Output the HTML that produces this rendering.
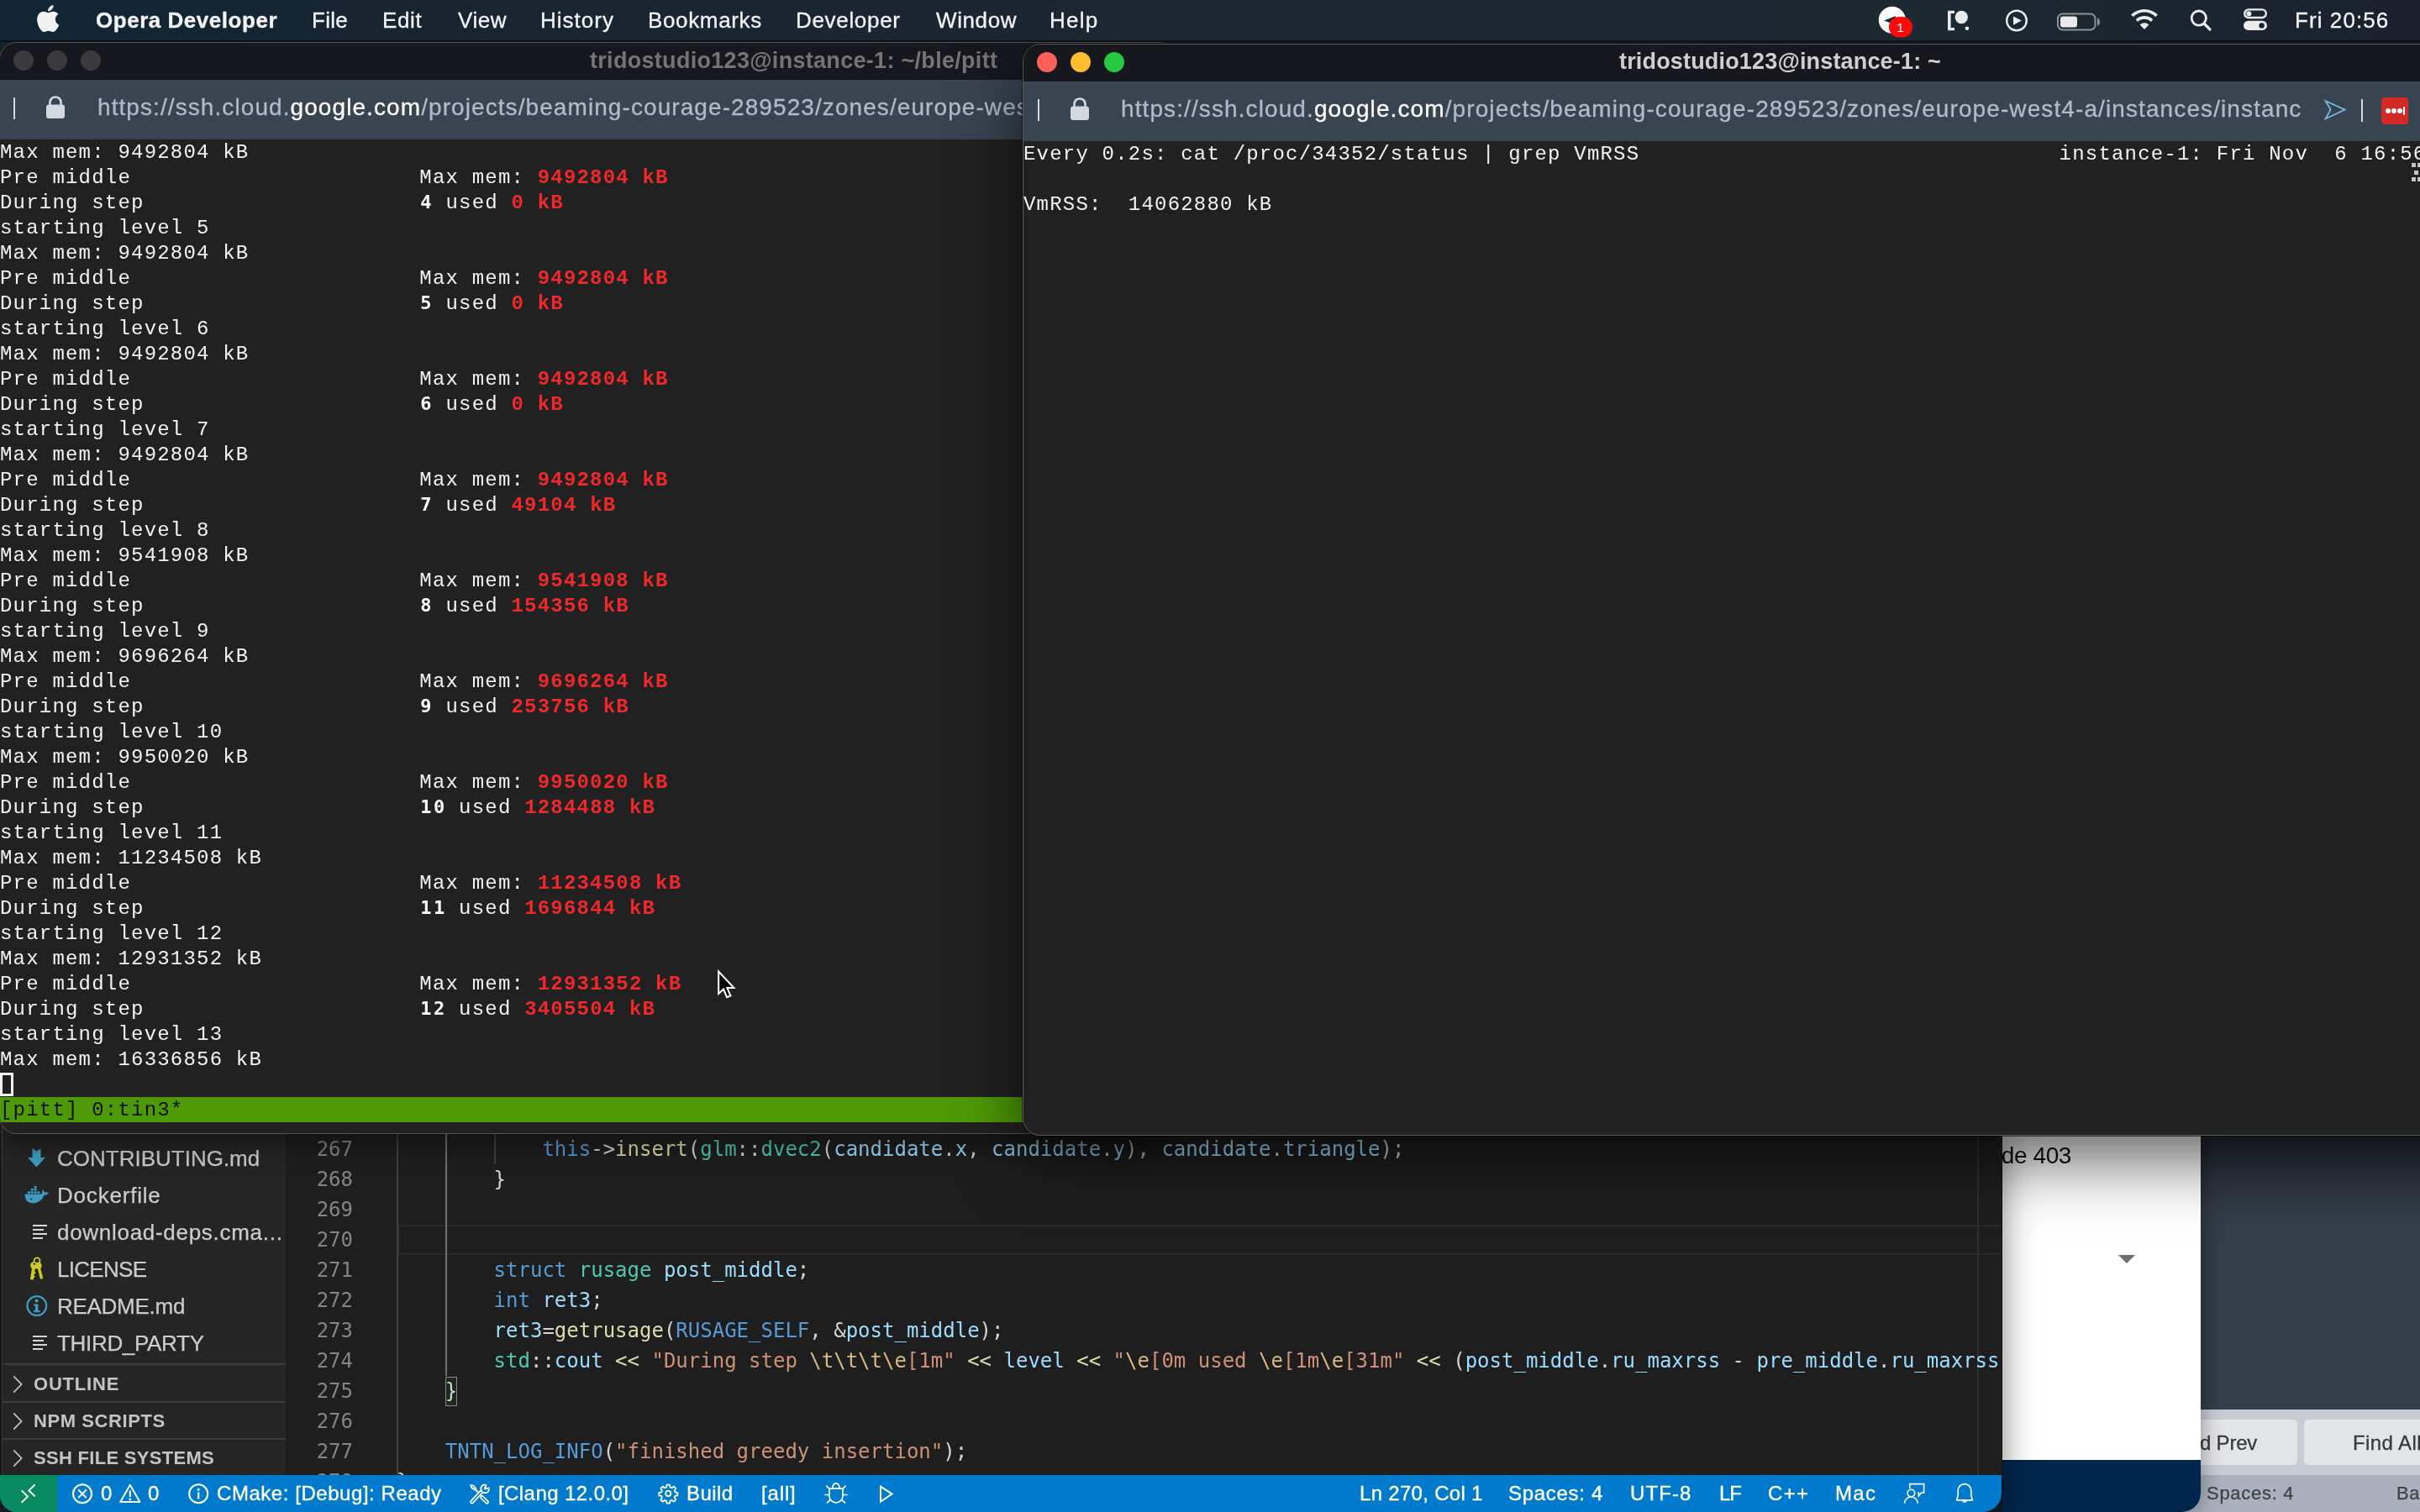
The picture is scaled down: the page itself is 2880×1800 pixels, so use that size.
<!DOCTYPE html>
<html lang="en">
<head>
<meta charset="utf-8">
<title>Desktop</title>
<style>
*{box-sizing:border-box;margin:0;padding:0}
html,body{width:2880px;height:1800px;overflow:hidden;background:#16232e}
body{position:relative;font-family:"Liberation Sans",sans-serif;color:#fff}
.abs{position:absolute}
.t{position:absolute;white-space:pre;line-height:1;will-change:transform}
/* ---------- menu bar ---------- */
#menubar{position:absolute;left:0;top:0;width:2880px;height:50px;background:linear-gradient(90deg,#112535 0%,#122533 8%,#182531 16%,#1b2631 40%,#1c2931 80%,#1b252f 90%,#1a212d 100%);z-index:50}
#menubar:after{content:"";position:absolute;left:0;right:0;bottom:0;height:2px;background:rgba(0,0,0,.55)}
#menubar .t{color:#f4f4f5;font-size:26px;top:9px;line-height:30px;letter-spacing:.6px;-webkit-text-stroke:.3px #f4f4f5}
/* ---------- terminal windows ---------- */
.win{position:absolute;border-radius:20px;background:#212121;overflow:hidden}
.win .title{position:absolute;left:0;right:0;top:0;height:44px;background:#16181e}
.win .url{position:absolute;left:0;right:0;top:44px;height:71px;background:#394451}
.win .url .t{font-size:28px;top:16.4px;line-height:34px;color:#adbccb;letter-spacing:1.08px;-webkit-text-stroke:.3px #adbccb}
.win .url b{-webkit-text-stroke:.3px #fff}
.win .url b{font-weight:normal;color:#fff}
.tl{position:absolute;width:24px;height:24px;border-radius:50%;top:9px;margin-left:1px}
#winR .url>*{margin-left:1px}
#winR .url>#urlR{margin-left:0}
.term{position:absolute;left:0;top:115px;font-family:"Liberation Mono",monospace;font-size:24px;letter-spacing:1.2px;line-height:30px;color:#f2f2f2;white-space:pre}
.term .l{height:30px;line-height:31.6px;overflow:hidden}
.term .r{color:#ef2929;font-weight:bold}
.term .w{font-family:"DejaVu Sans Mono",monospace;font-weight:bold;font-size:22px;letter-spacing:2.36px;margin-left:1px;margin-right:-1px;color:#fff;line-height:20px}
.ttl{font-weight:bold;font-size:27px;top:4.2px;line-height:30px;letter-spacing:.3px}
.term .cur{display:inline-block;width:15.6px;height:28px;vertical-align:top;margin-top:1px;box-shadow:inset 0 0 0 3px #f2f2f2}
.term .tmux{display:inline-block;background:#4e9a06;color:#111;width:1300px;height:30px;vertical-align:top}
.dot{position:absolute;top:13px;width:6px;height:6px;border-radius:50%;background:#fff}
.sq{position:absolute;width:5px;height:5px;background:#c4c4c4}
/* ---------- vscode ---------- */
.fn{left:68px;font-size:26px;line-height:30px;color:#cccccc;letter-spacing:.5px;-webkit-text-stroke:.25px #ccc}
.sh{left:40px;font-size:22px;line-height:30px;font-weight:bold;color:#c4c4c4;letter-spacing:.8px}
.ch{left:15px}
#ed .ln,#ed .cl{position:absolute;font-family:"DejaVu Sans Mono",monospace;font-size:24px;line-height:36px;height:36px;white-space:pre}
#ed .ln{left:0;width:80px;text-align:right;color:#858585}
#ed .cl{left:132px;color:#d4d4d4}
.k{color:#569cd6}.f{color:#dcdcaa}.t2{color:#4ec9b0}.v{color:#9cdcfe}.s{color:#ce9178}.e{color:#d7ba7d}
#sb .t{font-size:24px;line-height:30px;top:7px;color:#fff;letter-spacing:.4px;-webkit-text-stroke:.35px #fff}
</style>
</head>
<body>

<!-- ===== background apps (Sublime / white page) ===== -->
<div id="sublime" class="abs" style="left:2600px;top:1340px;width:280px;height:460px;background:linear-gradient(180deg,#222931 0,#2c343e 40px,#343d48 110px)">
  <div class="abs" style="left:0;top:338px;width:280px;height:78px;background:#c8ccd5"></div>
  <div class="abs" style="left:0;top:416px;width:280px;height:44px;background:#abb1bc"></div>
  <div class="abs" style="left:0;top:350px;width:134px;height:54px;background:#e3e4e8;border-radius:0 5px 5px 0"></div>
  <div class="abs" style="left:142px;top:350px;width:160px;height:54px;background:#e3e4e8;border-radius:5px"></div>
  <span class="t" id="su0" style="left:18px;top:363px;font-size:24px;line-height:30px;color:#36393e;letter-spacing:-.2px;-webkit-text-stroke:.3px #36393e">d Prev</span>
  <span class="t" id="su1" style="left:200px;top:363px;font-size:24px;line-height:30px;color:#36393e;letter-spacing:.4px;-webkit-text-stroke:.3px #36393e">Find All</span>
  <span class="t" id="su2" style="left:26px;top:423px;font-size:22px;line-height:30px;color:#3e4147;letter-spacing:.72px;-webkit-text-stroke:.25px #3e4147">Spaces: 4</span>
  <span class="t" id="su3" style="left:252px;top:423px;font-size:22px;line-height:30px;color:#3e4147;letter-spacing:.5px;-webkit-text-stroke:.25px #3e4147">Bash</span>
</div>
<div id="whitewin" class="abs" style="left:2383px;top:1340px;width:236px;height:460px;background:#fff;border-radius:0 0 22px 0;overflow:hidden;box-shadow:0 0 26px rgba(0,0,0,.4)">
  <span class="t" id="c403" style="left:-30px;top:19px;font-size:28px;line-height:34px;color:#111;letter-spacing:-.4px">code 403</span>
  <svg class="abs" style="left:137px;top:153px" width="22" height="12" viewBox="0 0 22 12"><path d="M1 1 H21 L11 11 Z" fill="#6e6e6e"/></svg>
  <div class="abs" style="left:0;top:398px;width:236px;height:62px;background:#00264d"></div>
</div>

<!-- ===== VS Code ===== -->
<div id="vscode" class="abs" style="left:0;top:1340px;width:2382px;height:460px;background:#1e1e1e;border-radius:0 0 22px 20px;overflow:hidden;box-shadow:0 0 0 1px #111,0 10px 40px rgba(0,0,0,.5)">
  <!-- sidebar -->
  <i class="abs" style="left:0;top:0;width:2px;height:416px;background:#181818;z-index:3"></i><i class="abs" style="left:2px;top:0;width:1px;height:416px;background:#383838;z-index:3"></i>
  <div id="side" class="abs" style="left:0;top:0;width:340px;height:416px;background:#252526">
    <svg class="abs" style="left:33px;top:27px" width="21" height="23" viewBox="0 0 21 23"><path d="M5.5 0 L10.5 3.6 L15.5 0 V11 H21 L10.5 22.6 L0 11 H5.5 Z" fill="#3f9cc0"/></svg>
    <span class="t fn" style="top:24px;letter-spacing:0.00px">CONTRIBUTING.md</span>
    <svg class="abs" style="left:29px;top:72px" width="30" height="21" viewBox="0 0 30 21"><path d="M0.6 9.6 H20.6 C21.4 7.4 21.6 5.6 20.8 3.8 C22.6 4.6 23.6 6 23.8 7.6 C25.8 7 27.6 7.4 28.8 8.2 C27.8 10 26 10.8 23.6 10.8 C21.4 16.6 16.6 20.4 9.6 20.4 C3.8 20.4 0.6 16.4 0.6 9.6 Z" fill="#3f9cc0"/><path d="M4 6.2h3v2.6H4zM7.8 6.2h3v2.6h-3zM11.6 6.2h3v2.6h-3zM15.4 6.2h3v2.6h-3zM7.8 3h3v2.6h-3zM11.6 3h3v2.6h-3zM11.6 -0.2h3v2.6h-3z" fill="#3f9cc0"/><circle cx="8.2" cy="15.4" r="1" fill="#252526"/></svg>
    <span class="t fn" style="top:68px;letter-spacing:0.80px">Dockerfile</span>
    <svg class="abs" style="left:39px;top:118px" width="18" height="18" viewBox="0 0 18 18"><path d="M0 1h17M0 6h13M0 11h17M0 16h12" stroke="#d4d7d6" stroke-width="2" fill="none"/></svg>
    <span class="t fn" style="top:112px;letter-spacing:0.71px">download-deps.cma...</span>
    <svg class="abs" style="left:35px;top:156px" width="17" height="29" viewBox="0 0 17 29"><g fill="none" stroke="#cccb28" stroke-linecap="butt"><circle cx="9" cy="4.8" r="3.5" stroke-width="1.8"/><path d="M5.4 11 L2.8 27.4" stroke-width="3.8"/><path d="M11 12 L14.6 26.4" stroke-width="3.4"/></g><circle cx="5.6" cy="10.4" r="4.4" fill="#cccb28"/><circle cx="10.6" cy="10.8" r="4" fill="#cccb28"/><circle cx="6" cy="8.6" r="1.2" fill="#252526"/><path d="M4.6 18 l3 .5 l-.4 2 l-3 -.5z M4 22.6 l2.6 .4 l-.3 2 l-2.6 -.4z" fill="#cccb28"/></svg>
    <span class="t fn" style="top:156px;letter-spacing:-0.71px">LICENSE</span>
    <svg class="abs" style="left:30px;top:201px" width="28" height="28" viewBox="0 0 28 28"><circle cx="13.8" cy="13.6" r="11.4" fill="none" stroke="#3f9cc0" stroke-width="2.2"/><path d="M11.8 5.8h3.6v3.4h-3.6z M10 11.4h5.4v7.6h2.2v2.2H10v-2.2h2V13.6h-2z" fill="#3f9cc0"/></svg>
    <span class="t fn" style="top:200px;letter-spacing:-0.28px">README.md</span>
    <svg class="abs" style="left:39px;top:250px" width="18" height="18" viewBox="0 0 18 18"><path d="M0 1h17M0 6h13M0 11h17M0 16h12" stroke="#d4d7d6" stroke-width="2" fill="none"/></svg>
    <span class="t fn" style="top:244px;letter-spacing:-0.32px">THIRD_PARTY</span>
    <i class="abs" style="left:0;top:283px;width:340px;height:2px;background:#3c3c3d"></i>
    <svg class="abs ch" style="top:296px" width="14" height="24" viewBox="0 0 14 24"><path d="M1.2 2.4 L10.6 12 L1.2 21.6" fill="none" stroke="#c8c8c8" stroke-width="1.7"/></svg>
    <span class="t sh" style="top:293px">OUTLINE</span>
    <i class="abs" style="left:0;top:328px;width:340px;height:2px;background:#3c3c3d"></i>
    <svg class="abs ch" style="top:340px" width="14" height="24" viewBox="0 0 14 24"><path d="M1.2 2.4 L10.6 12 L1.2 21.6" fill="none" stroke="#c8c8c8" stroke-width="1.7"/></svg>
    <span class="t sh" style="top:337px;letter-spacing:.58px">NPM SCRIPTS</span>
    <i class="abs" style="left:0;top:372px;width:340px;height:2px;background:#3c3c3d"></i>
    <svg class="abs ch" style="top:384px" width="14" height="24" viewBox="0 0 14 24"><path d="M1.2 2.4 L10.6 12 L1.2 21.6" fill="none" stroke="#c8c8c8" stroke-width="1.7"/></svg>
    <span class="t sh" style="top:381px;letter-spacing:.3px">SSH FILE SYSTEMS</span>
  </div>
  <!-- editor -->
  <div id="ed" class="abs" style="left:340px;top:10px;width:2041px;height:406px;overflow:hidden">
    <div class="abs" style="left:134px;top:108px;width:1920px;height:36px;border:2.5px solid #282828;border-right:0"></div>
    <i class="abs" style="left:132px;top:0;width:2px;height:407px;background:#404040"></i>
    <i class="abs" style="left:190px;top:0;width:2px;height:288px;background:#707070"></i>
    <i class="abs" style="left:248px;top:0;width:2px;height:36px;background:#404040"></i>
    <i class="abs" style="left:2013px;top:0;width:2px;height:407px;background:#303030"></i>
    <div class="abs" style="left:190px;top:289px;width:14px;height:35px;border:1px solid #8a8a8a;background:#1c2a1c"></div>
<div class="ln" style="top:0px">267</div><div class="cl" style="top:0px">            <span class="k">this</span>-&gt;<span class="f">insert</span>(<span class="t2">glm</span>::<span class="t2">dvec2</span>(<span class="v">candidate</span>.<span class="v">x</span>, <span class="v">candidate</span>.<span class="v">y</span>), <span class="v">candidate</span>.<span class="v">triangle</span>);</div>
<div class="ln" style="top:36px">268</div><div class="cl" style="top:36px">        }</div>
<div class="ln" style="top:72px">269</div><div class="cl" style="top:72px"></div>
<div class="ln" style="top:108px">270</div><div class="cl" style="top:108px"></div>
<div class="ln" style="top:144px">271</div><div class="cl" style="top:144px">        <span class="k">struct</span> <span class="t2">rusage</span> <span class="v">post_middle</span>;</div>
<div class="ln" style="top:180px">272</div><div class="cl" style="top:180px">        <span class="k">int</span> <span class="v">ret3</span>;</div>
<div class="ln" style="top:216px">273</div><div class="cl" style="top:216px">        <span class="v">ret3</span>=<span class="f">getrusage</span>(<span class="k">RUSAGE_SELF</span>, &amp;<span class="v">post_middle</span>);</div>
<div class="ln" style="top:252px">274</div><div class="cl" style="top:252px">        <span class="t2">std</span>::<span class="v">cout</span> <span class="f">&lt;&lt;</span> <span class="s">"During step </span><span class="e">\t\t\t\e</span><span class="s">[1m"</span> <span class="f">&lt;&lt;</span> <span class="v">level</span> <span class="f">&lt;&lt;</span> <span class="s">"</span><span class="e">\e</span><span class="s">[0m used </span><span class="e">\e</span><span class="s">[1m</span><span class="e">\e</span><span class="s">[31m"</span> <span class="f">&lt;&lt;</span> (<span class="v">post_middle</span>.<span class="v">ru_maxrss</span> - <span class="v">pre_middle</span>.<span class="v">ru_maxrss</span> - <span class="v">x</span></div>
<div class="ln" style="top:288px">275</div><div class="cl" style="top:288px">    }</div>
<div class="ln" style="top:324px">276</div><div class="cl" style="top:324px"></div>
<div class="ln" style="top:360px">277</div><div class="cl" style="top:360px">    <span class="k">TNTN_LOG_INFO</span>(<span class="s">"finished greedy insertion"</span>);</div>
<div class="ln" style="top:396px">278</div><div class="cl" style="top:396px">}</div>
  </div>
  <!-- status bar -->
  <div id="sb" class="abs" style="left:0;top:416px;width:2382px;height:44px;background:#007acc">
    <div class="abs" style="left:0;top:0;width:68px;height:44px;background:#078a5f"></div>
    <svg class="abs" style="left:22px;top:8px" width="26" height="28" viewBox="0 0 26 28"><path d="M3.6 10.4 L11 17.6 L3.6 24.8 M19.6 3.4 L12.4 10.4 L19.6 17.4" fill="none" stroke="#fff" stroke-width="2"/></svg>
    <svg class="abs" style="left:84px;top:8px" width="28" height="28" viewBox="0 0 28 28"><circle cx="14" cy="14.3" r="11" fill="none" stroke="#fff" stroke-width="2"/><path d="M9.2 9.5 L18.8 19.1 M18.8 9.5 L9.2 19.1" stroke="#fff" stroke-width="2"/></svg>
    <span class="t" id="s0" style="left:120.0px;letter-spacing:0.00px">0</span>
    <svg class="abs" style="left:141px;top:9px" width="28" height="26" viewBox="0 0 28 26"><path d="M13.8 2.8 L25.4 23 H2.2 Z" fill="none" stroke="#fff" stroke-width="2" stroke-linejoin="round"/><path d="M13.8 9.6 V17" stroke="#fff" stroke-width="2.2"/><circle cx="13.8" cy="19.9" r="1.4" fill="#fff"/></svg>
    <span class="t" id="s1" style="left:176.4px;letter-spacing:0.40px">0</span>
    <svg class="abs" style="left:222px;top:8px" width="28" height="28" viewBox="0 0 28 28"><circle cx="14.2" cy="14.3" r="11" fill="none" stroke="#fff" stroke-width="2"/><path d="M14.2 12.6 V20.2" stroke="#fff" stroke-width="2.2"/><circle cx="14.2" cy="9.2" r="1.5" fill="#fff"/></svg>
    <span class="t" id="s2" style="left:257.8px;letter-spacing:0.55px">CMake: [Debug]: Ready</span>
    <svg class="abs" style="left:557px;top:8px" width="28" height="28" viewBox="0 0 28 28"><g fill="none" stroke-linecap="round" stroke-linejoin="round"><path d="M3 4 L6.4 4.6 L9.4 8.6 L8.2 9.8 L4.2 7 Z" stroke="#fff" stroke-width="1.7"/><path d="M8.8 9.2 L15.4 16.4" stroke="#fff" stroke-width="1.9"/><path d="M16.6 18.6 L22.6 24.2" stroke="#fff" stroke-width="4.8"/><path d="M16.6 18.6 L22.6 24.2" stroke="#007acc" stroke-width="1.5"/><path d="M4.6 24 L16.4 11.4" stroke="#fff" stroke-width="4.8"/><path d="M4.6 24 L15.6 12.2" stroke="#007acc" stroke-width="1.5"/><circle cx="20.2" cy="8.4" r="4.9" stroke="#fff" stroke-width="2" fill="#007acc"/><path d="M20.2 8.4 L22 -1 L30 7 Z" fill="#007acc" stroke="#007acc" stroke-width="2.4"/><path d="M21.4 3.8 L19.9 8.6 L24.8 7.4" stroke="#fff" stroke-width="1.9"/></g></svg>
    <span class="t" id="s3" style="left:593.2px;letter-spacing:0.43px">[Clang 12.0.0]</span>
    <svg class="abs" style="left:781px;top:8px" width="28" height="28" viewBox="0 0 28 28"><g fill="none" stroke="#fff" stroke-width="2" stroke-linejoin="round" transform="translate(14.3 14) scale(.9) translate(-14.2 -14.2)"><circle cx="14.2" cy="14.2" r="3.4"/><path d="M12.4 2.6h3.6l.7 3.2 2.2.9 2.8-1.8 2.5 2.5-1.8 2.8.9 2.2 3.2.7v3.6l-3.2.7-.9 2.2 1.8 2.8-2.5 2.5-2.8-1.8-2.2.9-.7 3.2h-3.6l-.7-3.2-2.2-.9-2.8 1.8-2.5-2.5 1.8-2.8-.9-2.2-3.2-.7v-3.6l3.2-.7.9-2.2-1.8-2.8 2.5-2.5 2.8 1.8 2.2-.9z"/></g></svg>
    <span class="t" id="s4" style="left:816.6px;letter-spacing:0.45px">Build</span>
    <span class="t" id="s5" style="left:906.2px;letter-spacing:0.85px">[all]</span>
    <svg class="abs" style="left:981px;top:7px" width="28" height="30" viewBox="0 0 28 30"><g fill="none" stroke="#fff" stroke-width="1.7" stroke-linecap="round" stroke-linejoin="round"><path d="M9.6 9.1 A4.35 6.2 0 0 1 18.3 9.1"/><path d="M6.6 9.1 H21.3 Q22 9.1 22 10 V17.8 A8.05 8.05 0 0 1 5.9 17.8 V10 Q5.9 9.1 6.6 9.1 Z"/><path d="M2.8 6.2 L6.6 10 M25.1 6.2 L21.3 10 M0.9 16.5 H5.9 M22 16.5 H27 M3.4 25.9 L7.4 22.4 M24.5 25.9 L20.5 22.4"/></g></svg>
    <svg class="abs" style="left:1044px;top:10px" width="22" height="26" viewBox="0 0 22 26"><path d="M4 3.6 L17.6 12.6 L4 21.6 Z" fill="none" stroke="#fff" stroke-width="2" stroke-linejoin="miter"/></svg>
    <span class="t" id="s6" style="left:1618.4px;letter-spacing:0.30px">Ln 270, Col 1</span>
    <span class="t" id="s7" style="left:1795.4px;letter-spacing:0.70px">Spaces: 4</span>
    <span class="t" id="s8" style="left:1940.4px;letter-spacing:1.10px">UTF-8</span>
    <span class="t" id="s9" style="left:2045.6px;letter-spacing:-1.20px">LF</span>
    <span class="t" id="s10" style="left:2104.0px;letter-spacing:1.30px">C++</span>
    <span class="t" id="s11" style="left:2184.0px;letter-spacing:1.30px">Mac</span>
    <svg class="abs" style="left:2264px;top:7px" width="30" height="30" viewBox="0 0 30 30"><g fill="none" stroke="#fff" stroke-width="1.6" stroke-linejoin="miter"><path d="M8.8 9 V3.6 H25.6 V14.2 H22.2 L19.4 17.8 V14.2 H18.2"/><circle cx="10.4" cy="14.6" r="4.3"/><path d="M2.6 26.8 A7.8 7.8 0 0 1 18.2 26.8"/></g></svg>
    <svg class="abs" style="left:2324px;top:7px" width="28" height="30" viewBox="0 0 28 30"><g fill="none" stroke="#fff" stroke-width="1.7" stroke-linejoin="round"><path d="M4.6 22.8 H23.4 L21.8 17.6 V11.4 A7.8 7.8 0 0 0 6.2 11.4 V17.6 Z"/><path d="M11.6 23.2 A2.5 2.5 0 0 0 16.4 23.2"/></g></svg>
  </div>
</div>

<!-- ===== left terminal ===== -->
<div id="winL" class="win" style="left:0px;top:51px;width:1400px;height:1298px;box-shadow:0 0 0 1px #555,0 14px 34px rgba(0,0,0,.45)">
  <div class="title">
    <i class="tl" style="left:15px;background:#3a3a3c"></i><i class="tl" style="left:55px;background:#3a3a3c"></i><i class="tl" style="left:95px;background:#3a3a3c"></i>
    <span class="t ttl" style="left:702px;top:5.5px;color:#757578">tridostudio123@instance-1: ~/ble/pitt</span>
  </div>
  <div class="url">
    <i class="abs" style="left:16px;top:21px;width:2px;height:26px;background:#d0d6dc"></i>
    <svg class="abs" style="left:54px;top:18px" width="24" height="29" viewBox="0 0 24 30" preserveAspectRatio="none"><path d="M5.5 13V9a6.5 6.5 0 0 1 13 0v4" fill="none" stroke="#d3d9de" stroke-width="2.6"/><rect x="1" y="12" width="22" height="17" rx="3.5" fill="#d3d9de"/></svg>
    <span class="t" style="left:116px">https://ssh.cloud.<b>google.com</b>/projects/beaming-courage-289523/zones/europe-west4-a/instances/instance-1</span>
  </div>
<div class="term" id="termL"><div class="l">Max mem: 9492804 kB</div><div class="l">Pre middle                      Max mem: <span class="r">9492804 kB</span></div><div class="l">During step                     <span class="w">4</span> used <span class="r">0 kB</span></div><div class="l">starting level 5</div><div class="l">Max mem: 9492804 kB</div><div class="l">Pre middle                      Max mem: <span class="r">9492804 kB</span></div><div class="l">During step                     <span class="w">5</span> used <span class="r">0 kB</span></div><div class="l">starting level 6</div><div class="l">Max mem: 9492804 kB</div><div class="l">Pre middle                      Max mem: <span class="r">9492804 kB</span></div><div class="l">During step                     <span class="w">6</span> used <span class="r">0 kB</span></div><div class="l">starting level 7</div><div class="l">Max mem: 9492804 kB</div><div class="l">Pre middle                      Max mem: <span class="r">9492804 kB</span></div><div class="l">During step                     <span class="w">7</span> used <span class="r">49104 kB</span></div><div class="l">starting level 8</div><div class="l">Max mem: 9541908 kB</div><div class="l">Pre middle                      Max mem: <span class="r">9541908 kB</span></div><div class="l">During step                     <span class="w">8</span> used <span class="r">154356 kB</span></div><div class="l">starting level 9</div><div class="l">Max mem: 9696264 kB</div><div class="l">Pre middle                      Max mem: <span class="r">9696264 kB</span></div><div class="l">During step                     <span class="w">9</span> used <span class="r">253756 kB</span></div><div class="l">starting level 10</div><div class="l">Max mem: 9950020 kB</div><div class="l">Pre middle                      Max mem: <span class="r">9950020 kB</span></div><div class="l">During step                     <span class="w">10</span> used <span class="r">1284488 kB</span></div><div class="l">starting level 11</div><div class="l">Max mem: 11234508 kB</div><div class="l">Pre middle                      Max mem: <span class="r">11234508 kB</span></div><div class="l">During step                     <span class="w">11</span> used <span class="r">1696844 kB</span></div><div class="l">starting level 12</div><div class="l">Max mem: 12931352 kB</div><div class="l">Pre middle                      Max mem: <span class="r">12931352 kB</span></div><div class="l">During step                     <span class="w">12</span> used <span class="r">3405504 kB</span></div><div class="l">starting level 13</div><div class="l">Max mem: 16336856 kB</div><div class="l"><span class="cur"> </span></div><div class="l"><span class="tmux">[pitt] 0:tin3*                                                                                          </span></div></div>
</div>

<!-- ===== right terminal ===== -->
<div id="winR" class="win" style="left:1218px;top:53px;width:1800px;height:1298px;box-shadow:0 0 0 1px #5c5c5c,0 0 0 2px rgba(0,0,0,.6),0 30px 80px rgba(0,0,0,.62)">
  <div class="title">
    <i class="tl" style="left:15px;background:#fe5f57"></i><i class="tl" style="left:55px;background:#febc2e"></i><i class="tl" style="left:95px;background:#28c840"></i>
    <span class="t ttl" style="left:708.5px;top:5px;letter-spacing:.17px;color:#d0d0d0">tridostudio123@instance-1: ~</span>
  </div>
  <div class="url">
    <i class="abs" style="left:16px;top:21px;width:2px;height:26px;background:#d0d6dc"></i>
    <svg class="abs" style="left:54px;top:18px" width="24" height="29" viewBox="0 0 24 30" preserveAspectRatio="none"><path d="M5.5 13V9a6.5 6.5 0 0 1 13 0v4" fill="none" stroke="#d3d9de" stroke-width="2.6"/><rect x="1" y="12" width="22" height="17" rx="3.5" fill="#d3d9de"/></svg>
    <span class="t" id="urlR" style="left:116.3px;letter-spacing:1.1px">https://ssh.cloud.<b>google.com</b>/projects/beaming-courage-289523/zones/europe-west4-a/instances/instanc</span>
    <svg class="abs" style="left:1546px;top:20px" width="30" height="28" viewBox="0 0 30 28"><path d="M2.6 3.2 L25.6 13.6 L2.6 24.4 L8.6 13.6 Z" fill="none" stroke="#74bfee" stroke-width="1.7" stroke-linejoin="miter"/></svg>
    <i class="abs" style="left:1591px;top:21px;width:2px;height:27px;background:#d0d6dc"></i>
    <div class="abs" style="left:1615px;top:19px;width:32px;height:32px;border-radius:4px;background:#d32a26"><i class="dot" style="left:5px"></i><i class="dot" style="left:12px"></i><i class="dot" style="left:19px"></i><i class="abs" style="left:26px;top:11px;width:2px;height:10px;background:#fff"></i></div>
  </div>
  <div class="term" id="termR"><div class="l">Every 0.2s: cat /proc/34352/status | grep VmRSS                                instance-1: Fri Nov  6 16:56:26 2020</div><div class="l"> </div><div class="l">VmRSS:  14062880 kB</div></div>
  <div class="abs" style="left:1652px;top:141px;width:20px;height:30px;overflow:hidden"><i class="sq" style="left:0;top:0"></i><i class="sq" style="left:7px;top:0"></i><i class="sq" style="left:3px;top:8.5px"></i><i class="sq" style="left:0;top:17px"></i><i class="sq" style="left:7px;top:17px"></i></div>
</div>

<!-- ===== menu bar ===== -->
<div id="menubar">
  <svg class="abs" style="left:44px;top:6px" width="27" height="32" viewBox="2.5 0 19.5 24"><path fill="#f0f0f1" d="M12.152 6.896c-.948 0-2.415-1.078-3.96-1.04-2.04.027-3.91 1.183-4.961 3.014-2.117 3.675-.546 9.103 1.519 12.09 1.013 1.454 2.208 3.09 3.792 3.039 1.52-.065 2.09-.987 3.935-.987 1.831 0 2.35.987 3.96.948 1.637-.026 2.676-1.48 3.676-2.948 1.156-1.688 1.636-3.325 1.662-3.415-.039-.013-3.182-1.221-3.22-4.857-.026-3.04 2.48-4.494 2.597-4.559-1.429-2.09-3.623-2.324-4.39-2.376-2-.156-3.675 1.09-4.61 1.09zM15.53 3.83c.843-1.012 1.4-2.427 1.245-3.83-1.207.052-2.662.805-3.532 1.818-.78.896-1.454 2.338-1.273 3.714 1.338.104 2.715-.688 3.559-1.701"/></svg>
  <span class="t" id="m0" style="left:114.0px;font-weight:bold;letter-spacing:0.53px">Opera Developer</span>
  <span class="t" id="m1" style="left:371.2px;letter-spacing:0.26px">File</span>
  <span class="t" id="m2" style="left:455.0px;letter-spacing:0.60px">Edit</span>
  <span class="t" id="m3" style="left:544.8px;letter-spacing:0.54px">View</span>
  <span class="t" id="m4" style="left:643.4px;letter-spacing:1.00px">History</span>
  <span class="t" id="m5" style="left:771.2px;letter-spacing:0.65px">Bookmarks</span>
  <span class="t" id="m6" style="left:946.8px;letter-spacing:0.68px">Developer</span>
  <span class="t" id="m7" style="left:1113.6px;letter-spacing:0.60px">Window</span>
  <span class="t" id="m8" style="left:1249.0px;letter-spacing:1.27px">Help</span>
  <!-- status icons -->
  <svg class="abs" style="left:2230px;top:4px" width="50" height="44" viewBox="0 0 50 44">
    <circle cx="21.8" cy="19.8" r="16" fill="#fff"/>
    <path d="M12 20.6 L26 15 L24 24 L19 23 Z" fill="#1a2630"/>
    <rect x="18" y="16" width="28" height="24.5" rx="12.2" fill="#ff0a0a"/>
    <text x="31.6" y="33.6" font-family="Liberation Sans, sans-serif" font-size="15.5" fill="#fff" text-anchor="middle">1</text>
  </svg>
  <svg class="abs" style="left:2316px;top:10px" width="30" height="30" viewBox="0 0 30 30">
    <path d="M2 2.8 H10 V6 H5.6 V23 H10 V26.2 H2 Z" fill="#e9e9ea"/>
    <circle cx="18.3" cy="10.5" r="7.7" fill="#e9e9ea"/><circle cx="24.9" cy="23.7" r="2.3" fill="#e9e9ea"/>
  </svg>
  <svg class="abs" style="left:2385px;top:10px" width="30" height="30" viewBox="0 0 30 30">
    <circle cx="15" cy="14.5" r="11.8" fill="none" stroke="#ececed" stroke-width="2.4"/><path d="M11 9.6 L20.8 14.6 L11 19.8 Z" fill="#ececed"/>
  </svg>
  <svg class="abs" style="left:2446px;top:12px" width="56" height="28" viewBox="0 0 56 28">
    <rect x="3" y="4.6" width="44.5" height="18.8" rx="5.5" fill="none" stroke="#8d9499" stroke-width="2"/>
    <rect x="6" y="7.4" width="20" height="13" rx="3" fill="#e9e9eb"/>
    <path d="M50 9 Q53.2 11 53.2 14 Q53.2 17 50 19 Z" fill="#8d9499"/>
  </svg>
  <svg class="abs" style="left:2534px;top:9px" width="36" height="28" viewBox="0 0 36 28">
    <g fill="none" stroke="#ececed" stroke-width="3.6" stroke-linecap="butt">
      <path d="M3.4 9.8 A20.5 20.5 0 0 1 32.6 9.8"/>
      <path d="M9 15.6 A12.8 12.8 0 0 1 27 15.6"/>
    </g>
    <path d="M18 26 L12.6 20.4 A7.6 7.6 0 0 1 23.4 20.4 Z" fill="#ececed"/>
  </svg>
  <svg class="abs" style="left:2604px;top:9px" width="30" height="30" viewBox="0 0 30 30">
    <circle cx="12.8" cy="12.6" r="8.6" fill="none" stroke="#ececed" stroke-width="2.8"/><path d="M19 19 L26 26" stroke="#ececed" stroke-width="3.2" stroke-linecap="round"/>
  </svg>
  <svg class="abs" style="left:2668px;top:8px" width="32" height="30" viewBox="0 0 32 30">
    <rect x="3.2" y="3.4" width="25.6" height="9.6" rx="4.8" fill="none" stroke="#ececed" stroke-width="2.4"/><circle cx="8.4" cy="8.2" r="3" fill="#ececed"/>
    <rect x="2" y="16.8" width="28" height="11.2" rx="5.6" fill="#ececed"/><circle cx="23.6" cy="22.4" r="3.2" fill="#1a2230"/>
  </svg>
  <span class="t" id="m9" style="left:2731.4px;letter-spacing:1.08px">Fri 20:56</span>
</div>

<!-- mouse cursor -->
<svg class="abs" style="left:850px;top:1150px;z-index:60" width="32" height="44" viewBox="0 0 32 44"><path d="M5.2 6.6 L5.2 32.9 L11.0 27.5 L15.1 37.2 L19.4 35.4 L15.3 26.0 L23.4 26.0 Z" fill="#000" stroke="#fff" stroke-width="2" stroke-linejoin="miter"/></svg>
</body>
</html>
